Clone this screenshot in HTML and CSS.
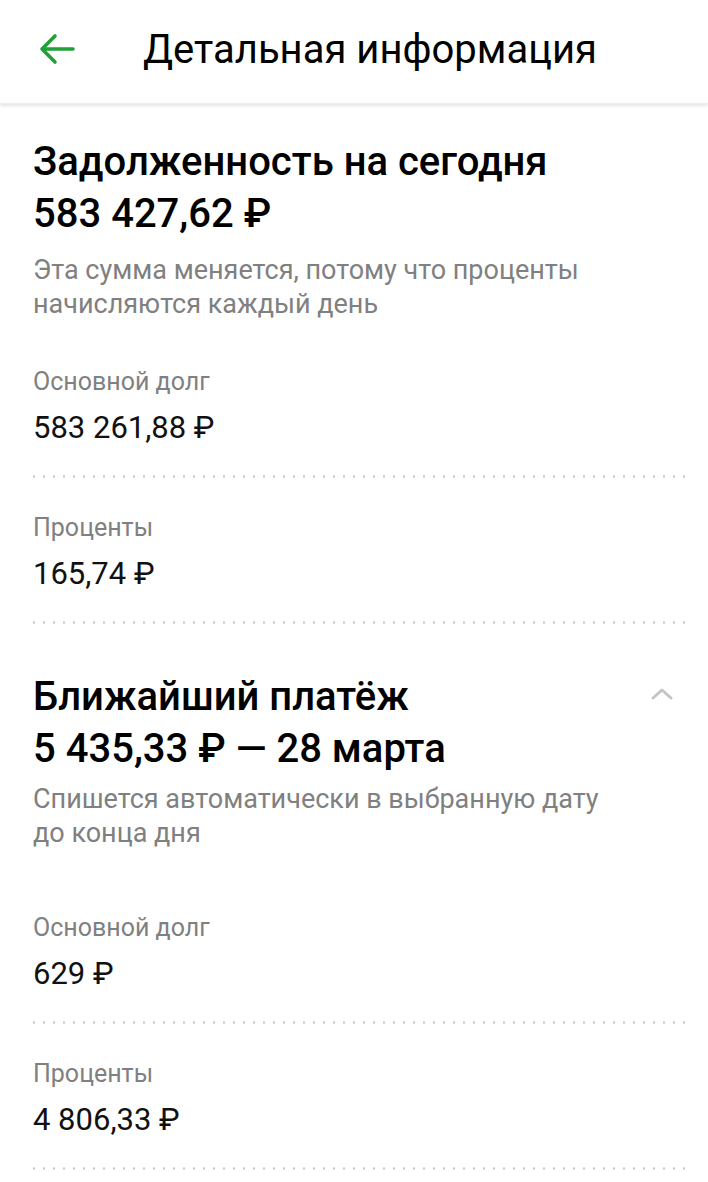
FILE: index.html
```html
<!DOCTYPE html>
<html lang="ru">
<head>
<meta charset="utf-8">
<title>Детальная информация</title>
<link rel="stylesheet" href="styles.css">
</head>
<body>
<header class="topbar">
  <svg class="back" width="40" height="36" viewBox="0 0 40 36" aria-hidden="true">
    <path d="M36 18H5M18 5L5 18L18 31" fill="none" stroke="#21a038" stroke-width="3.6" stroke-linecap="round" stroke-linejoin="round"/>
  </svg>
  <h1 class="topbar-title">Детальная информация</h1>
</header>

<main class="content">
  <section class="block">
    <div class="block-head">
      <div>
        <h2 class="block-title">Задолженность на сегодня</h2>
        <div class="block-sum">583 427,62 ₽</div>
      </div>
    </div>
    <p class="block-note">Эта сумма меняется, потому что проценты начисляются каждый день</p>
    <div class="rows">
      <div class="row">
        <div class="row-label">Основной долг</div>
        <div class="row-value">583 261,88 ₽</div>
      </div>
      <div class="row">
        <div class="row-label">Проценты</div>
        <div class="row-value">165,74 ₽</div>
      </div>
    </div>
  </section>

  <section class="block block-second">
    <div class="block-head">
      <div>
        <h2 class="block-title">Ближайший платёж</h2>
        <div class="block-sum">5 435,33 ₽ — 28 марта</div>
      </div>
      <svg class="chevron" width="24" height="14" viewBox="0 0 24 14" aria-hidden="true">
        <path d="M3 11L12 3L21 11" fill="none" stroke="#c4c4c4" stroke-width="3" stroke-linecap="round" stroke-linejoin="round"/>
      </svg>
    </div>
    <p class="block-note">Спишется автоматически в выбранную дату до конца дня</p>
    <div class="rows">
      <div class="row">
        <div class="row-label">Основной долг</div>
        <div class="row-value">629 ₽</div>
      </div>
      <div class="row">
        <div class="row-label">Проценты</div>
        <div class="row-value">4 806,33 ₽</div>
      </div>
    </div>
  </section>
</main>
</body>
</html>
```

FILE: styles.css
```css
html, body {
  margin: 0;
  padding: 0;
  background: #ffffff;
}

body {
  font-family: Roboto, "Noto Sans", "DejaVu Sans", sans-serif;
  color: #0c0c0c;
  width: 708px;
  overflow: hidden;
}

.topbar {
  height: 104px;
  display: flex;
  align-items: center;
  box-shadow: 0 2px 3px rgba(0, 0, 0, 0.10);
  border-bottom: 1px solid #ececec;
  box-sizing: border-box;
  padding-left: 37px;
  gap: 66px;
}

.back {
  flex: none;
  margin-top: -6px;
}

.topbar-title {
  margin: 0;
  font-size: 40px;
  font-weight: 400;
  color: #000;
  margin-top: -4px;
}

.content {
  padding: 0 20px 0 33px;
}

.block {
  padding-top: 32px;
}

.block-second {
  padding-top: 13px;
}

.block-head {
  display: flex;
  justify-content: space-between;
  align-items: flex-start;
}

.block-title {
  margin: 0;
  font-size: 40px;
  line-height: 52px;
  font-weight: 500;
  color: #000;
}

.block-sum {
  font-size: 40px;
  line-height: 52px;
  font-weight: 500;
  color: #000;
}

.chevron {
  margin-top: 16px;
  margin-right: 14px;
}

.block-note {
  margin: 13px 0 0;
  font-size: 27px;
  line-height: 34px;
  color: #808080;
  max-width: 572px;
}

.block-second .block-note {
  margin-top: 7px;
}

.rows {
  margin-top: 46px;
}

.block-second .rows {
  margin-top: 63px;
}

.row {
  padding-bottom: 32px;
  margin-bottom: 34px;
  background-image: radial-gradient(circle, #c8c8c8 1px, transparent 1.3px);
  background-size: 10px 3px;
  background-repeat: repeat-x;
  background-position: -4px bottom;
}

.row + .row .row-label {
  padding-top: 1px;
}

.row-label {
  font-size: 25px;
  line-height: 30px;
  color: #808080;
}

.row-value {
  margin-top: 13px;
  font-size: 31px;
  line-height: 36px;
  color: #111;
}
```
